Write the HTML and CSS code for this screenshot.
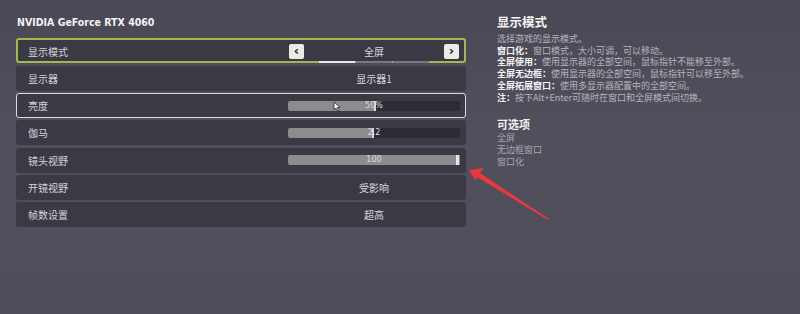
FILE: index.html
```html
<!DOCTYPE html>
<html lang="zh-CN">

<head>
    <meta charset="UTF-8">
    <meta name="viewport" content="width=device-width, initial-scale=1.0">
    <title>显示设置</title>
    <link rel="stylesheet" href="styles.css">
</head>

<body>
    <div class="page">
        <div class="settings">
            <h1 class="gpu">NVIDIA GeForce RTX 4060</h1>

            <div class="row row-focus">
                <span class="label">显示模式</span>
                <div class="control selector">
                    <span class="arrow-btn">&lsaquo;</span>
                    <div class="sel-mid">
                        <span class="value">全屏</span>
                        <div class="dots">
                            <span class="dot on"></span>
                            <span class="dot"></span>
                            <span class="dot"></span>
                        </div>
                    </div>
                    <span class="arrow-btn">&rsaquo;</span>
                </div>
            </div>

            <div class="row">
                <span class="label">显示器</span>
                <div class="control"><span class="value">显示器1</span></div>
            </div>

            <div class="row row-hover">
                <span class="label">亮度</span>
                <div class="control">
                    <div class="track">
                        <div class="fill" style="width: 51%"></div>
                        <span class="handle" style="left: 51%"></span>
                        <span class="track-text">50%</span>
                        <svg class="cursor" width="8" height="11" viewBox="0 0 8 11">
                            <path d="M1 1 L1 9 L3 7 L4.5 10 L5.8 9.4 L4.4 6.5 L7 6.5 Z" fill="#fff" stroke="#222" stroke-width="0.8"/>
                        </svg>
                    </div>
                </div>
            </div>

            <div class="row">
                <span class="label">伽马</span>
                <div class="control">
                    <div class="track">
                        <div class="fill" style="width: 50%"></div>
                        <span class="handle" style="left: 50%"></span>
                        <span class="track-text">2.2</span>
                    </div>
                </div>
            </div>

            <div class="row">
                <span class="label">镜头视野</span>
                <div class="control">
                    <div class="track">
                        <div class="fill" style="width: 100%"></div>
                        <span class="handle end" style="left: 100%"></span>
                        <span class="track-text">100</span>
                    </div>
                </div>
            </div>

            <div class="row">
                <span class="label">开镜视野</span>
                <div class="control"><span class="value">受影响</span></div>
            </div>

            <div class="row">
                <span class="label">帧数设置</span>
                <div class="control"><span class="value">超高</span></div>
            </div>
        </div>

        <div class="info">
            <h2>显示模式</h2>
            <p>选择游戏的显示模式。</p>
            <p><b>窗口化：</b>窗口模式，大小可调，可以移动。</p>
            <p><b>全屏使用：</b>使用显示器的全部空间，鼠标指针不能移至外部。</p>
            <p><b>全屏无边框：</b>使用显示器的全部空间，鼠标指针可以移至外部。</p>
            <p><b>全屏拓展窗口：</b>使用多显示器配置中的全部空间。</p>
            <p><b>注：</b>按下Alt+Enter可随时在窗口和全屏模式间切换。</p>

            <h3>可选项</h3>
            <ul class="options">
                <li>全屏</li>
                <li>无边框窗口</li>
                <li>窗口化</li>
            </ul>
        </div>
    </div>

    <!-- annotation arrow -->
    <svg class="mark" width="100" height="70" viewBox="0 0 100 70">
        <polygon points="9,10 24,8 20,13 89,59 88,60 17,17 16,21" fill="#e8383d"/>
    </svg>
</body>

</html>
```

FILE: styles.css
```css
* {
    box-sizing: border-box;
}

html, body {
    margin: 0;
    height: 100%;
}

body {
    background: linear-gradient(#4a4855, #514f5c 40%, #504e5b);
    font-family: "Noto Sans CJK SC", "Noto Sans", sans-serif;
    color: #d6d6da;
    position: relative;
    overflow: hidden;
}

.page {
    display: flex;
    gap: 31px;
    padding: 14px 0 0 16px;
}

.settings {
    width: 450px;
    display: flex;
    flex-direction: column;
    gap: 2.35px;
}

.gpu {
    font-family: "DejaVu Sans Condensed", "Noto Sans", sans-serif;
    font-size: 10.5px;
    font-weight: bold;
    color: #f2f2f2;
    margin: 1px 0 6px 1px;
    line-height: 15px;
}

.row {
    height: 25px;
    background: #3b3944;
    border-radius: 3px;
    border: 1px solid transparent;
    display: grid;
    grid-template-columns: 1fr 172px;
    align-items: center;
    padding: 0 5px 0 11px;
    font-size: 10px;
}

.row-focus {
    border: 2px solid #a2b853;
    padding: 0 4px 0 10px;
}

.row-hover {
    border-color: #dcdce0;
}

.label {
    color: #d4d4d8;
}

.control {
    display: flex;
    justify-content: center;
    align-items: center;
    height: 100%;
}

.value {
    color: #d8d8dc;
}

.selector {
    justify-content: space-between;
    padding: 0 1px;
}

.arrow-btn {
    width: 15px;
    height: 15px;
    background: #ecebe6;
    color: #222;
    border-radius: 2px;
    font-family: "DejaVu Sans", sans-serif;
    font-weight: bold;
    font-size: 13px;
    line-height: 13px;
    text-align: center;
}

.sel-mid {
    display: flex;
    flex-direction: column;
    align-items: center;
    padding-top: 5px;
}

.sel-mid .value {
    line-height: 14px;
}

.dots {
    display: flex;
    gap: 1px;
    margin-top: 2px;
}

.dot {
    width: 36px;
    height: 2px;
    background: #7a7982;
}

.dot.on {
    background: #e6e6e6;
}

.track {
    position: relative;
    width: 100%;
    height: 10px;
    background: #2d2b34;
    border-radius: 2px;
}

.fill {
    height: 100%;
    background: #8c8b90;
    border-radius: 2px 0 0 2px;
}

.handle {
    position: absolute;
    top: 0;
    width: 2px;
    height: 10px;
    margin-left: -2px;
    background: #d8d8d8;
}

.handle.end {
    width: 3px;
    margin-left: -4px;
    background: #e6e6e6;
}

.track-text {
    position: absolute;
    inset: 0;
    text-align: center;
    font-family: "DejaVu Sans", sans-serif;
    font-size: 8px;
    line-height: 10px;
    color: #dcdcdc;
}

.cursor {
    position: absolute;
    left: 45px;
    top: 0;
}

.info {
    width: 290px;
    font-size: 9px;
    line-height: 11.7px;
    color: #b6b5bd;
}

.info h2 {
    font-size: 12.5px;
    line-height: 16px;
    margin: 0 0 3px;
    color: #f4f4f4;
}

.info p {
    margin: 0;
    white-space: nowrap;
}

.info b {
    color: #f2f2f2;
}

.info h3 {
    font-size: 11px;
    line-height: 14px;
    margin: 14px 0 1px;
    color: #f0f0f0;
}

.options {
    list-style: none;
    margin: 0;
    padding: 0;
    line-height: 11.7px;
    color: #a8a7b0;
}

.mark {
    position: absolute;
    left: 460px;
    top: 160px;
    pointer-events: none;
}
```
